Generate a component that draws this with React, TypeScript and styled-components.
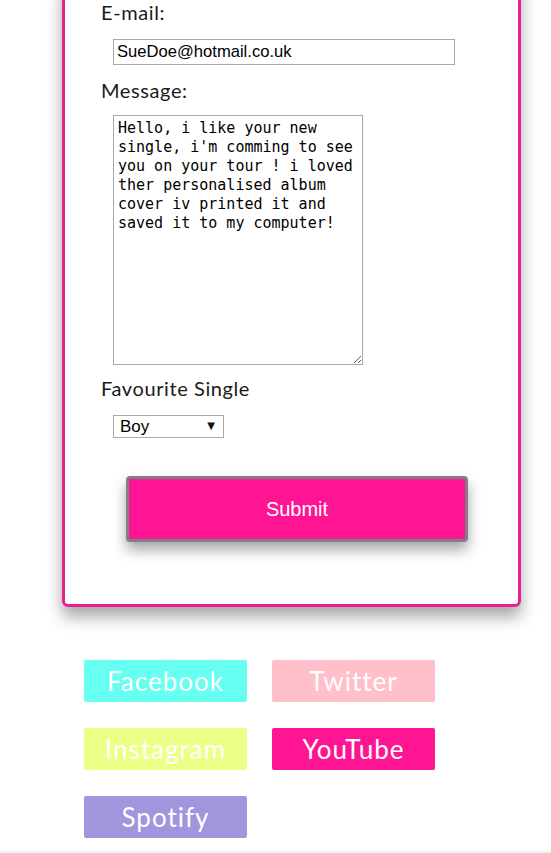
import React from "react";
import styled, { createGlobalStyle } from "styled-components";

const GlobalStyle = createGlobalStyle`
  html, body { margin: 0; padding: 0; background: #ffffff; }
  body { font-family: "Lato", "Open Sans", sans-serif; }
`;

const Page = styled.div`
  display: flex;
  flex-direction: column;
  min-height: 853px;
  overflow: hidden;
`;

const Card = styled.form`
  box-sizing: border-box;
  width: 459px;
  margin: -23px 0 0 62px;
  padding: 20px 30px 62px 36px;
  background: #fff;
  border: 3px solid #e8218f;
  border-radius: 6px;
  box-shadow: 0 10px 16px rgba(0, 0, 0, 0.35);
  display: flex;
  flex-direction: column;
  align-items: flex-start;
`;

const Label = styled.label<{ $gap?: number }>`
  display: block;
  font-family: "Lato", "Open Sans", sans-serif;
  font-weight: 400;
  font-size: 20px;
  line-height: 24px;
  color: #1a1a1a;
  margin-top: ${(p) => p.$gap ?? 0}px;
  letter-spacing: 0.6px;
`;

const TextInput = styled.input`
  box-sizing: border-box;
  margin: 15px 0 0 12px;
  width: 342px;
  height: 26px;
  padding: 0 3px;
  border: 1px solid #a9a9a9;
  font-family: "Liberation Sans", Arial, sans-serif;
  font-size: 16.6px;
  color: #000;
`;

const TextArea = styled.textarea`
  box-sizing: border-box;
  margin: 13px 0 0 12px;
  width: 250px;
  height: 250px;
  padding: 3px 4px;
  border: 1px solid #a9a9a9;
  font-family: "DejaVu Sans Mono", monospace;
  font-size: 15px;
  line-height: 19px;
  color: #000;
  resize: both;
`;

const SelectWrap = styled.div`
  position: relative;
  margin: 15px 0 0 12px;
`;

const Select = styled.select`
  box-sizing: border-box;
  appearance: none;
  -webkit-appearance: none;
  width: 111px;
  height: 23px;
  padding: 0 6px;
  border: 1px solid #a9a9a9;
  border-radius: 0;
  background: #fff;
  font-family: "Liberation Sans", Arial, sans-serif;
  font-size: 17px;
  color: #000;
`;

const Arrow = styled.span`
  position: absolute;
  right: 9px;
  top: 5px;
  font-size: 10px;
  color: #111;
  pointer-events: none;
  font-family: "DejaVu Sans", sans-serif;
`;

const SubmitButton = styled.button`
  box-sizing: border-box;
  margin: 38px 0 0 25px;
  width: 342px;
  height: 66px;
  background: #ff1493;
  border: 3px solid #7f7f85;
  border-radius: 4px;
  box-shadow: 0 8px 14px rgba(0, 0, 0, 0.35);
  color: #fff;
  font-family: "Liberation Sans", Arial, sans-serif;
  font-size: 20px;
`;

const Socials = styled.div`
  display: grid;
  grid-template-columns: 163px 163px;
  column-gap: 25px;
  row-gap: 26px;
  margin: 53px 0 0 84px;
`;

const Social = styled.a<{ $bg: string }>`
  display: flex;
  align-items: center;
  justify-content: center;
  height: 42px;
  background: ${(p) => p.$bg};
  border-radius: 2px;
  color: #fff;
  text-decoration: none;
  font-family: "Lato", "Open Sans", sans-serif;
  font-weight: 400;
  font-size: 26px;
  letter-spacing: 1px;
`;

const Footer = styled.div`
  margin-top: 13px;
  flex: 1;
  background: #f0f0f0;
`;

const socials = [
  { name: "Facebook", bg: "#66fff2" },
  { name: "Twitter", bg: "#ffc0cb" },
  { name: "Instagram", bg: "#eeff88" },
  { name: "YouTube", bg: "#ff1493" },
  { name: "Spotify", bg: "#a195de" },
];

export default function App() {
  return (
    <>
      <GlobalStyle />
      <Page>
        <Card onSubmit={(e) => e.preventDefault()}>
          <Label>E-mail:</Label>
          <TextInput type="email" defaultValue="SueDoe@hotmail.co.uk" />
          <Label $gap={13}>Message:</Label>
          <TextArea
            defaultValue={
              "Hello, i like your new single, i'm comming to see you on your tour ! i loved ther personalised album cover iv printed it and saved it to my computer!"
            }
          />
          <Label $gap={11}>Favourite Single</Label>
          <SelectWrap>
            <Select defaultValue="Boy">
              <option>Boy</option>
              <option>Girl</option>
            </Select>
            <Arrow>▼</Arrow>
          </SelectWrap>
          <SubmitButton type="submit">Submit</SubmitButton>
        </Card>
        <Socials>
          {socials.map((s) => (
            <Social key={s.name} href="#" $bg={s.bg}>
              {s.name}
            </Social>
          ))}
        </Socials>
        <Footer />
      </Page>
    </>
  );
}
